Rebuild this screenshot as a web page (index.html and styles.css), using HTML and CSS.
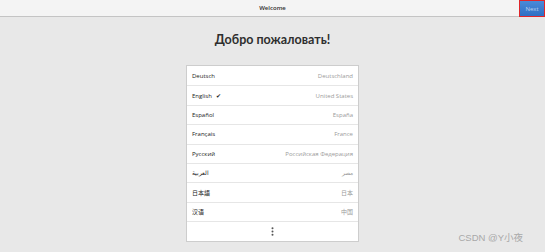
FILE: index.html
```html
<!DOCTYPE html>
<html lang="ru">
<head>
  <meta charset="UTF-8">
  <title>Welcome</title>
  <link rel="stylesheet" href="styles.css">
</head>
<body>

  <div class="header">
    <span class="title">Welcome</span>
    <button class="next">Next</button>
  </div>

  <div class="page">
    <h1 class="greeting">Добро пожаловать!</h1>

    <div class="languages">
      <div class="row"><span class="lang">Deutsch</span><span class="region">Deutschland</span></div>
      <div class="row"><span class="lang">English <span class="check">✔</span></span><span class="region">United States</span></div>
      <div class="row"><span class="lang">Español</span><span class="region">España</span></div>
      <div class="row"><span class="lang">Français</span><span class="region">France</span></div>
      <div class="row"><span class="lang">Русский</span><span class="region">Российская Федерация</span></div>
      <div class="row"><span class="lang">العربية</span><span class="region">مصر</span></div>
      <div class="row"><span class="lang">日本語</span><span class="region">日本</span></div>
      <div class="row"><span class="lang">汉语</span><span class="region">中国</span></div>
      <div class="row more">
        <svg width="3" height="9" viewBox="0 0 3 9">
          <circle cx="1.5" cy="1.2" r="1" fill="#555"/>
          <circle cx="1.5" cy="4.5" r="1" fill="#555"/>
          <circle cx="1.5" cy="7.8" r="1" fill="#555"/>
        </svg>
      </div>
    </div>
  </div>

  <div class="watermark">CSDN @Y小夜</div>

</body>
</html>
```

FILE: styles.css
```css
body {
  margin: 0;
  height: 252px;
  background: #e8e8e8;
  font-family: 'Open Sans', 'Noto Sans CJK SC', sans-serif;
  overflow: hidden;
  position: relative;
}

.header {
  height: 16px;
  background: #f4f4f4;
  border-bottom: 1px solid #c4c4c4;
  display: flex;
  align-items: center;
  justify-content: center;
  position: relative;
}

.title {
  font-size: 6px;
  font-weight: 600;
  color: #2e2e2e;
}

.next {
  position: absolute;
  right: 0;
  top: 0;
  width: 26px;
  height: 17px;
  padding: 0;
  border: 1px solid #e0262a;
  background: linear-gradient(#4a8ad8, #2f6fc4);
  color: #bcd3f0;
  font-family: inherit;
  font-size: 6px;
}

.page {
  display: flex;
  flex-direction: column;
  align-items: center;
}

.greeting {
  margin: 13px 0 0;
  height: 20px;
  line-height: 20px;
  font-family: 'Lato', sans-serif;
  font-size: 12.5px;
  font-weight: 700;
  color: #2e2e2e;
}

.languages {
  margin-top: 15px;
  width: 171px;
  background: #fff;
  border: 1px solid #cdcdcd;
}

.row {
  height: 19.4px;
  box-sizing: border-box;
  padding: 0 5px;
  display: flex;
  align-items: center;
  justify-content: space-between;
  font-size: 6px;
}

.row + .row {
  border-top: 1px solid #e6e6e6;
}

.lang {
  color: #222;
}

.check {
  margin-left: 3px;
  font-size: 6px;
}

.region {
  color: #9a9a9a;
}

.more {
  justify-content: center;
}

.watermark {
  position: absolute;
  right: 22px;
  bottom: 8px;
  font-family: 'Liberation Sans', 'Noto Sans CJK SC', sans-serif;
  font-size: 9.5px;
  color: #a8a8a8;
}
```
